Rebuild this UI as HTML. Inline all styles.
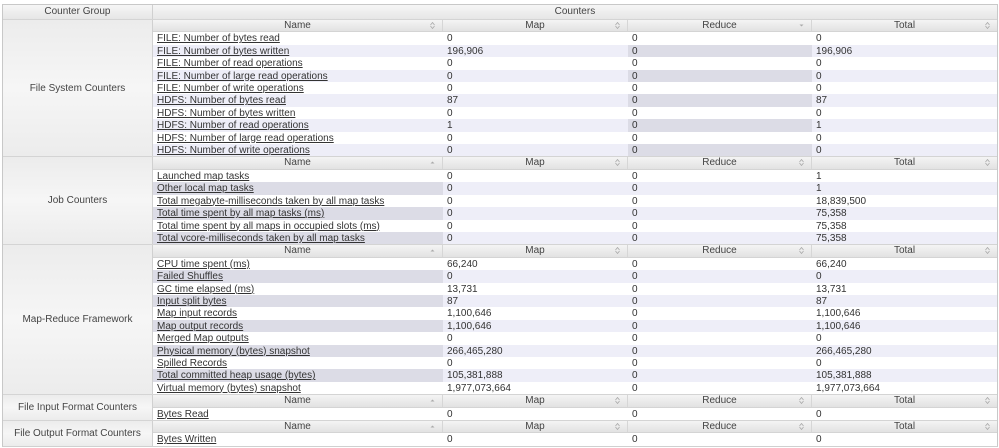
<!DOCTYPE html>
<html><head><meta charset="utf-8"><style>
body{margin:0;background:#fff;font-family:"Liberation Sans",Arial,sans-serif;font-size:10px;color:#333;}
#w{position:absolute;left:2px;top:4px;width:994px;border:1px solid #c8c8c8;border-bottom:1px solid #d0d0d0;}
.top{display:flex;height:14px;line-height:14px;border-bottom:1px solid #d4d4d4;background:linear-gradient(#f6f6f6,#e6e6e6);}
.top div{text-align:center;color:#444}
.sec{display:flex;border-bottom:1px solid #d4d4d4}
.sec:last-child{border-bottom:none}
.grp{width:149px;border-right:1px solid #d0d0d0;background:linear-gradient(#ececec,#f6f6f6 50%,#ececec);display:flex;align-items:center;justify-content:center;color:#444}
.rt{width:844px}
.r{display:flex;height:12.42px;line-height:13px}
.r div{overflow:hidden;white-space:nowrap;padding-left:4px;box-sizing:border-box}
.c1{width:290px}.c2{width:185px}.c3{width:184px}.c4{width:185px}
.h{background:linear-gradient(#f4f4f4,#e2e2e2);border-bottom:1px solid #d4d4d4;height:12.42px;box-sizing:border-box}
.h div{text-align:center;position:relative;color:#444;border-right:1px solid #d6d6d6;padding-left:0!important;line-height:12px}
.h div:last-child{border-right:none}
.h svg{position:absolute;right:7px;top:2px}
.r.s{background:#eeeef8}
.r.s .d{background:#dcdce6}
a{color:#333;text-decoration:underline}
</style></head><body>
<div id="w">
<div class="top"><div style="width:149px;border-right:1px solid #d0d0d0">Counter Group</div><div style="width:845px">Counters</div></div>
<div id="body"></div>
</div>
<script>
var B='<svg width="5" height="7" viewBox="0 0 5 7"><path d="M0.5 3L2.5 0.5L4.5 3M0.5 4L2.5 6.5L4.5 4" fill="none" stroke="#aaa" stroke-width="0.8"/></svg>';
var U='<svg width="5" height="7" viewBox="0 0 5 7"><path d="M0.5 4.5L2.5 2.5L4.5 4.5Z" fill="#aaa"/></svg>';
var D='<svg width="5" height="7" viewBox="0 0 5 7"><path d="M0.5 2.5L2.5 4.5L4.5 2.5Z" fill="#aaa"/></svg>';
var secs=[
["File System Counters",3,[["FILE: Number of bytes read","0","0","0"],["FILE: Number of bytes written","196,906","0","196,906"],["FILE: Number of read operations","0","0","0"],["FILE: Number of large read operations","0","0","0"],["FILE: Number of write operations","0","0","0"],["HDFS: Number of bytes read","87","0","87"],["HDFS: Number of bytes written","0","0","0"],["HDFS: Number of read operations","1","0","1"],["HDFS: Number of large read operations","0","0","0"],["HDFS: Number of write operations","0","0","0"]]],
["Job Counters",1,[["Launched map tasks","0","0","1"],["Other local map tasks","0","0","1"],["Total megabyte-milliseconds taken by all map tasks","0","0","18,839,500"],["Total time spent by all map tasks (ms)","0","0","75,358"],["Total time spent by all maps in occupied slots (ms)","0","0","75,358"],["Total vcore-milliseconds taken by all map tasks","0","0","75,358"]]],
["Map-Reduce Framework",1,[["CPU time spent (ms)","66,240","0","66,240"],["Failed Shuffles","0","0","0"],["GC time elapsed (ms)","13,731","0","13,731"],["Input split bytes","87","0","87"],["Map input records","1,100,646","0","1,100,646"],["Map output records","1,100,646","0","1,100,646"],["Merged Map outputs","0","0","0"],["Physical memory (bytes) snapshot","266,465,280","0","266,465,280"],["Spilled Records","0","0","0"],["Total committed heap usage (bytes)","105,381,888","0","105,381,888"],["Virtual memory (bytes) snapshot","1,977,073,664","0","1,977,073,664"]]],
["File Input Format Counters",1,[["Bytes Read","0","0","0"]]],
["File Output Format Counters",1,[["Bytes Written","0","0","0"]]]];
var h='';
secs.forEach(function(s){
 var sc=s[1];
 h+='<div class="sec"><div class="grp">'+s[0]+'</div><div class="rt"><div class="r h">';
 ['Name','Map','Reduce','Total'].forEach(function(n,i){
  var ic=(i+1==sc)?(sc==3?D:U):B;
  h+='<div class="c'+(i+1)+'">'+n+ic+'</div>';});
 h+='</div>';
 s[2].forEach(function(r,j){
  h+='<div class="r'+(j%2?' s':'')+'">';
  r.forEach(function(v,i){h+='<div class="c'+(i+1)+(i+1==sc?' d':'')+'">'+(i==0?'<a>'+v+'</a>':v)+'</div>';});
  h+='</div>';});
 h+='</div></div>';});
document.getElementById('body').innerHTML=h;
</script>
</body></html>
